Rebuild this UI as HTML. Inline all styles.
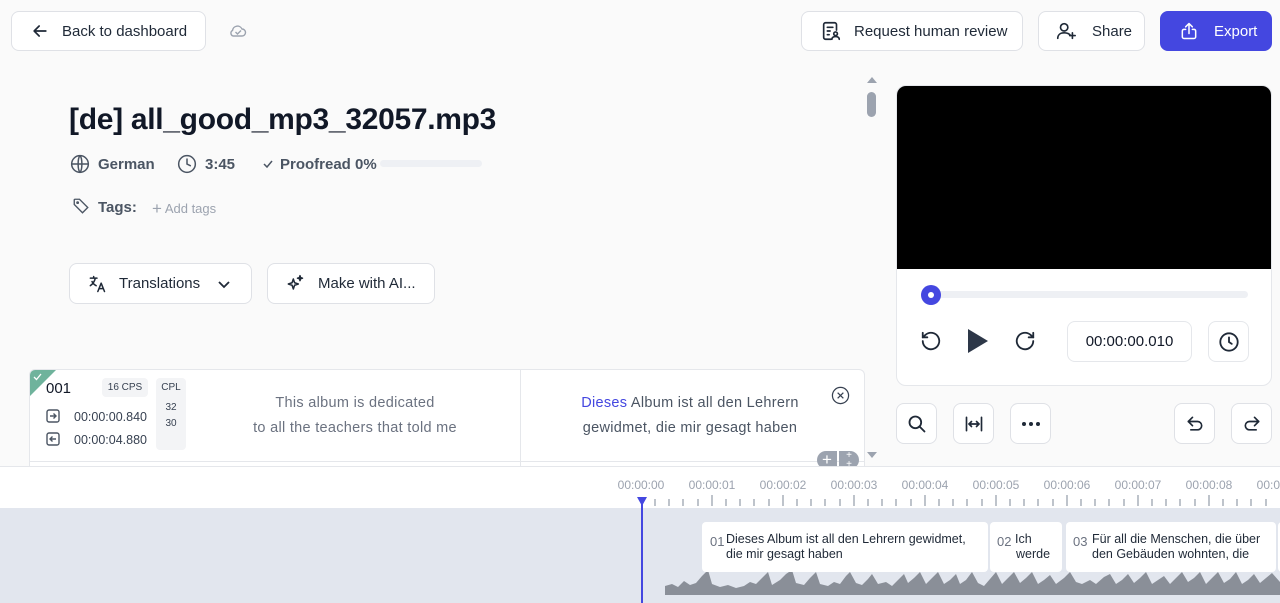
<!DOCTYPE html>
<html><head><meta charset="utf-8">
<style>
*{box-sizing:border-box;margin:0;padding:0}
body{width:1280px;height:603px;overflow:hidden;background:#fafafa;font-family:"Liberation Sans",sans-serif;color:#1f2937;position:relative}
.btn{position:absolute;border:1px solid #dfe1e6;border-radius:8px;background:#fff;display:flex;align-items:center;font-size:15px;color:#1f2937}
.btn svg{flex:none}
.abs{position:absolute}
.sq{position:absolute;width:41px;height:41px;border:1px solid #dfe1e6;border-radius:8px;background:#fff;display:flex;align-items:center;justify-content:center}
.meta{font-size:15px;color:#4b5563;font-weight:bold}
</style></head><body>

<div class="btn" style="left:11px;top:11px;width:195px;height:40px;padding-left:18px">
<svg width="20" height="20" viewBox="0 0 24 24" fill="none" stroke="#1f2937" stroke-width="2" stroke-linecap="round" stroke-linejoin="round"><path d="M19 12H5M11 6l-6 6 6 6"/></svg>
<span style="margin-left:12px">Back to dashboard</span></div>
<svg class="abs" style="left:229px;top:24px" width="18" height="14" viewBox="0 0 18 14" fill="none" stroke="#9ca3af" stroke-width="1.4"><path d="M4 12h9a3.5 3.5 0 0 0 0-7 5 5 0 0 0-9.5 1.5A3 3 0 0 0 4 12z"/><path d="M6.5 8l2 2 3.5-3.5"/></svg>

<div class="btn" style="left:801px;top:11px;width:222px;height:40px;padding-left:18px">
<svg width="22" height="22" viewBox="0 0 24 24" fill="none" stroke="#1f2937" stroke-width="1.8" stroke-linecap="round"><path d="M12 21H6a2 2 0 0 1-2-2V5a2 2 0 0 1 2-2h10a2 2 0 0 1 2 2v6"/><path d="M8 8h6M8 12h3M8 16h2"/><circle cx="17" cy="15" r="2"/><path d="M13 21c0-2 2-3 4-3s4 1 4 3"/></svg>
<span style="margin-left:12px">Request human review</span></div>
<div class="btn" style="left:1038px;top:11px;width:107px;height:40px;padding-left:16px">
<svg width="22" height="22" viewBox="0 0 24 24" fill="none" stroke="#1f2937" stroke-width="1.8" stroke-linecap="round"><circle cx="10" cy="8" r="4"/><path d="M3 20c0-4 3-6 7-6s6 1.5 7 3M19 14v6M16 17h6"/></svg>
<span style="margin-left:15px">Share</span></div>
<div class="btn" style="left:1160px;top:11px;width:112px;height:40px;padding-left:18px;background:#4447e0;border-color:#4447e0;color:#fff">
<svg width="20" height="20" viewBox="0 0 24 24" fill="none" stroke="#fff" stroke-width="1.8" stroke-linecap="round" stroke-linejoin="round"><path d="M8 10H6a2 2 0 0 0-2 2v7a2 2 0 0 0 2 2h12a2 2 0 0 0 2-2v-7a2 2 0 0 0-2-2h-2M12 15V3M8 7l4-4 4 4"/></svg>
<span style="margin-left:15px">Export</span></div>

<div class="abs" style="left:69px;top:103px;font-size:30px;font-weight:bold;color:#111827;letter-spacing:-0.3px">[de] all_good_mp3_32057.mp3</div>

<svg class="abs" style="left:70px;top:154px" width="20" height="20" viewBox="0 0 24 24" fill="none" stroke="#4b5563" stroke-width="1.8"><circle cx="12" cy="12" r="10"/><path d="M2 12h20M12 2c3 3 3 17 0 20M12 2c-3 3-3 17 0 20"/></svg>
<div class="abs meta" style="left:98px;top:156px">German</div>
<svg class="abs" style="left:177px;top:154px" width="20" height="20" viewBox="0 0 24 24" fill="none" stroke="#4b5563" stroke-width="1.8" stroke-linecap="round"><circle cx="12" cy="12" r="10"/><path d="M12 6v6l4 2"/></svg>
<div class="abs meta" style="left:205px;top:156px">3:45</div>
<svg class="abs" style="left:262px;top:158px" width="12" height="12" viewBox="0 0 12 12" fill="none" stroke="#4b5563" stroke-width="1.5"><path d="M2 6l3 3 5-6"/></svg>
<div class="abs meta" style="left:280px;top:156px">Proofread 0%</div>
<div class="abs" style="left:380px;top:160px;width:102px;height:7px;border-radius:4px;background:#eef0f4"></div>

<svg class="abs" style="left:72px;top:197px" width="18" height="18" viewBox="0 0 24 24" fill="none" stroke="#4b5563" stroke-width="1.8"><path d="M3 10V4a1 1 0 0 1 1-1h6l11 11-7 7L3 10z"/><circle cx="7.5" cy="7.5" r="1"/></svg>
<div class="abs meta" style="left:98px;top:199px">Tags:</div>
<div class="abs" style="left:152px;top:198px;font-size:13px;color:#9ca3af"><span style="font-size:17px;position:relative;top:1px">+</span> Add tags</div>

<div class="btn" style="left:69px;top:263px;width:183px;height:41px;padding-left:17px">
<svg width="20" height="20" viewBox="0 0 24 24" fill="none" stroke="#1f2937" stroke-width="1.8" stroke-linecap="round" stroke-linejoin="round"><path d="M4 5h8M8 3v2M10 5c-1 4-3 7-6 9M6 9c1 2 3 4 5 5M13 21l4-10 4 10M14.5 17.5h5"/></svg>
<span style="margin-left:12px">Translations</span>
<svg style="margin-left:16px" width="16" height="16" viewBox="0 0 16 16" fill="none" stroke="#1f2937" stroke-width="1.8"><path d="M3 6l5 5 5-5"/></svg></div>
<div class="btn" style="left:267px;top:263px;width:168px;height:41px;padding-left:17px">
<svg width="20" height="20" viewBox="0 0 24 24" fill="none" stroke="#1f2937" stroke-width="1.8" stroke-linejoin="round"><path d="M10 6l1.5 4.5L16 12l-4.5 1.5L10 18l-1.5-4.5L4 12l4.5-1.5z"/><path d="M18 2l.7 2.3L21 5l-2.3.7L18 8l-.7-2.3L15 5l2.3-.7z"/></svg>
<span style="margin-left:13px">Make with AI...</span></div>

<div class="abs" style="left:867px;top:77px;width:0;height:0;border-left:5px solid transparent;border-right:5px solid transparent;border-bottom:6px solid #9ca3af"></div>
<div class="abs" style="left:867px;top:92px;width:9px;height:25px;border-radius:5px;background:#9ca3af"></div>
<div class="abs" style="left:867px;top:452px;width:0;height:0;border-left:5px solid transparent;border-right:5px solid transparent;border-top:6px solid #9ca3af"></div>

<div class="abs" style="left:29px;top:369px;width:836px;height:110px;background:#fff;border:1px solid #e5e7eb;border-radius:6px;overflow:hidden">
 <div class="abs" style="left:0;top:0;width:0;height:0;border-top:26px solid #6fb39c;border-right:26px solid transparent"></div>
 <svg class="abs" style="left:3px;top:3px" width="9" height="8" viewBox="0 0 9 8" fill="none" stroke="#fff" stroke-width="1.3"><path d="M1 4l2.5 2.5L8 1"/></svg>
 <div class="abs" style="left:16px;top:10px;font-size:15px;color:#111827">001</div>
 <div class="abs" style="left:72px;top:8px;width:46px;height:19px;background:#f3f4f6;border-radius:4px;font-size:10px;text-align:center;line-height:19px;color:#374151">16 CPS</div>
 <div class="abs" style="left:126px;top:8px;width:30px;height:72px;background:#f3f4f6;border-radius:4px;font-size:10px;text-align:center;color:#374151;line-height:16px;padding-top:2px">CPL<br><span style="line-height:24px">32</span><br><span style="position:relative;top:-4px">30</span></div>
 <svg class="abs" style="left:16px;top:39px" width="14" height="14" viewBox="0 0 14 14" fill="none" stroke="#4b5563" stroke-width="1.4"><rect x="1" y="1" width="12" height="12" rx="2"/><path d="M4 7h6M7.5 4.5L10 7 7.5 9.5"/></svg>
 <div class="abs" style="left:44px;top:40px;font-size:12.5px;color:#374151">00:00:00.840</div>
 <svg class="abs" style="left:16px;top:62px" width="14" height="14" viewBox="0 0 14 14" fill="none" stroke="#4b5563" stroke-width="1.4"><rect x="1" y="1" width="12" height="12" rx="2"/><path d="M10 7H4M6.5 4.5L4 7l2.5 2.5"/></svg>
 <div class="abs" style="left:44px;top:63px;font-size:12.5px;color:#374151">00:00:04.880</div>
 <div class="abs" style="left:160px;top:21px;width:330px;text-align:center;font-size:14.5px;color:#6b7280;line-height:24.5px;letter-spacing:0.3px">This album is dedicated<br>to all the teachers that told me</div>
 <div class="abs" style="left:490px;top:0;width:1px;height:110px;background:#e5e7eb"></div>
 <div class="abs" style="left:0;top:91px;width:836px;height:1px;background:#e5e7eb"></div>
 <div class="abs" style="left:510px;top:21px;width:300px;text-align:center;font-size:14.5px;color:#4b5563;line-height:24.5px;letter-spacing:0.3px"><span style="color:#4447e0">Dieses</span> Album ist all den Lehrern<br>gewidmet, die mir gesagt haben</div>
 <svg class="abs" style="left:801px;top:16px" width="19" height="19" viewBox="0 0 20 20" fill="none" stroke="#374151" stroke-width="1.3"><circle cx="10" cy="10" r="8.5"/><path d="M7 7l6 6M13 7l-6 6"/></svg>
</div>
<div class="abs" style="left:817px;top:451px;width:20px;height:18px;border-radius:9px 0 0 9px;background:#9ca3af;color:#fff;font-size:17px;text-align:center;line-height:18px">+</div>
<div class="abs" style="left:839px;top:451px;width:20px;height:18px;border-radius:0 9px 9px 0;background:#9ca3af;color:#fff;font-size:10px;text-align:center;line-height:9px">+<br>+</div>

<div class="abs" style="left:896px;top:85px;width:376px;height:301px;background:#fff;border:1px solid #e5e7eb;border-radius:10px;overflow:hidden">
 <div style="height:183px;background:#000"></div>
 <div class="abs" style="left:28px;top:205px;width:323px;height:7px;border-radius:4px;background:#eef0f4"></div>
 <div class="abs" style="left:24px;top:199px;width:20px;height:20px;border-radius:50%;background:#4447e0"></div>
 <div class="abs" style="left:31px;top:206px;width:6px;height:6px;border-radius:50%;background:#fff"></div>
 <svg class="abs" style="left:23px;top:244px" width="22" height="22" viewBox="0 0 24 24" fill="none" stroke="#1f2937" stroke-width="2" stroke-linecap="round" stroke-linejoin="round"><path d="M3 12a9 9 0 1 0 3-6.7L3 8"/><path d="M3 3v5h5"/></svg>
 <svg class="abs" style="left:70px;top:242px" width="22" height="26" viewBox="0 0 22 26"><path d="M1 1L21 13 1 25z" fill="#2d3748"/></svg>
 <svg class="abs" style="left:117px;top:244px" width="22" height="22" viewBox="0 0 24 24" fill="none" stroke="#1f2937" stroke-width="2" stroke-linecap="round" stroke-linejoin="round"><path d="M21 12a9 9 0 1 1-3-6.7L21 8"/><path d="M21 3v5h-5"/></svg>
 <div class="abs" style="left:170px;top:235px;width:125px;height:41px;border:1px solid #e5e7eb;border-radius:8px;text-align:center;line-height:39px;font-size:15px;color:#111827">00:00:00.010</div>
 <div class="abs" style="left:311px;top:235px;width:41px;height:41px;border:1px solid #e5e7eb;border-radius:8px;display:flex;align-items:center;justify-content:center"><svg width="22" height="22" viewBox="0 0 24 24" fill="none" stroke="#1f2937" stroke-width="2" stroke-linecap="round"><circle cx="12" cy="12" r="9.5"/><path d="M12 7v5l3 2"/></svg></div>
</div>

<div class="sq" style="left:896px;top:403px"><svg width="20" height="20" viewBox="0 0 24 24" fill="none" stroke="#1f2937" stroke-width="2.2" stroke-linecap="round"><circle cx="10" cy="10" r="7"/><path d="M15 15l6 6"/></svg></div>
<div class="sq" style="left:953px;top:403px"><svg width="20" height="20" viewBox="0 0 24 24" fill="none" stroke="#1f2937" stroke-width="2" stroke-linecap="round"><path d="M3 4v16M21 4v16M6 12h12M9 9l-3 3 3 3M15 9l3 3-3 3"/></svg></div>
<div class="sq" style="left:1010px;top:403px"><svg width="20" height="6" viewBox="0 0 20 6" fill="#1f2937"><circle cx="3" cy="3" r="2"/><circle cx="10" cy="3" r="2"/><circle cx="17" cy="3" r="2"/></svg></div>
<div class="sq" style="left:1174px;top:403px"><svg width="20" height="20" viewBox="0 0 24 24" fill="none" stroke="#1f2937" stroke-width="2" stroke-linecap="round" stroke-linejoin="round"><path d="M9 14L4 9l5-5"/><path d="M4 9h11a5 5 0 0 1 0 10H7"/></svg></div>
<div class="sq" style="left:1231px;top:403px"><svg width="20" height="20" viewBox="0 0 24 24" fill="none" stroke="#1f2937" stroke-width="2" stroke-linecap="round" stroke-linejoin="round"><path d="M15 14l5-5-5-5"/><path d="M20 9H9a5 5 0 0 0 0 10h8"/></svg></div>

<div class="abs" style="left:0;top:466px;width:1280px;height:42px;background:#fff;border-top:1px solid #e5e7eb"></div>
<div class="abs" style="left:0;top:508px;width:1280px;height:95px;background:#e2e6ee"></div>
<svg class="abs" style="left:0;top:466px" width="1280" height="137">
<g font-family="Liberation Sans" font-size="12" fill="#9ca3af" text-anchor="middle">
<text x="641" y="23">00:00:00</text><text x="712" y="23">00:00:01</text><text x="783" y="23">00:00:02</text><text x="854" y="23">00:00:03</text><text x="925" y="23">00:00:04</text><text x="996" y="23">00:00:05</text><text x="1067" y="23">00:00:06</text><text x="1138" y="23">00:00:07</text><text x="1209" y="23">00:00:08</text><text x="1280" y="23">00:00:09</text>
</g>
<g stroke="#9ca3af" stroke-width="1.3">
<path d="M655 33v7M669 33v7M683 33v7M698 33v7M712 29v11M726 33v7M740 33v7M754 33v7M769 33v7M783 29v11M797 33v7M811 33v7M825 33v7M840 33v7M854 29v11M868 33v7M882 33v7M896 33v7M911 33v7M925 29v11M939 33v7M953 33v7M967 33v7M982 33v7M996 29v11M1010 33v7M1024 33v7M1038 33v7M1053 33v7M1067 29v11M1081 33v7M1095 33v7M1109 33v7M1124 33v7M1138 29v11M1152 33v7M1166 33v7M1180 33v7M1195 33v7M1209 29v11M1223 33v7M1237 33v7M1251 33v7M1266 33v7"/>
</g>
<polygon points="665,129 665,120 672,118 678,121 684,115 690,119 696,117 702,110 708,104 712,118 720,121 728,119 736,122 744,120 750,116 756,118 762,112 768,106 772,119 780,114 786,108 792,104 796,117 804,119 810,112 816,106 820,118 828,120 834,116 840,118 846,110 850,106 856,117 862,119 868,113 872,108 878,118 886,116 892,120 898,114 904,108 908,117 914,112 920,106 926,118 932,112 938,106 944,118 950,114 956,108 960,118 966,114 972,106 978,117 984,120 990,113 996,106 1002,118 1008,112 1014,106 1020,117 1026,112 1032,106 1038,118 1044,114 1050,109 1056,118 1064,112 1070,106 1076,116 1082,118 1090,114 1096,118 1104,111 1110,108 1116,118 1122,114 1128,108 1134,117 1140,112 1146,106 1152,118 1158,114 1164,110 1170,118 1176,112 1182,106 1188,116 1194,112 1200,106 1206,118 1212,112 1218,106 1224,117 1230,113 1236,106 1242,118 1248,114 1254,108 1260,117 1266,112 1272,107 1280,116 1280,129" fill="#8a8f98"/>
<rect x="702" y="56" width="286" height="50" rx="4" fill="#fff"/>
<rect x="990" y="56" width="72" height="50" rx="4" fill="#fff"/>
<rect x="1066" y="56" width="210" height="50" rx="4" fill="#fff"/>
<rect x="1278" y="56" width="10" height="50" rx="4" fill="#fff"/>
<g font-family="Liberation Sans" font-size="12.5" fill="#1f2937">
<text x="710" y="80" fill="#6b7280" font-size="13">01</text><text x="726" y="77">Dieses Album ist all den Lehrern gewidmet,</text><text x="726" y="92">die mir gesagt haben</text>
<text x="997" y="80" fill="#6b7280" font-size="13">02</text><text x="1015" y="77">Ich</text><text x="1016" y="92">werde</text>
<text x="1073" y="80" fill="#6b7280" font-size="13">03</text><text x="1092" y="77">Für all die Menschen, die über</text><text x="1092" y="92">den Gebäuden wohnten, die</text>
</g>
<rect x="641" y="36" width="2" height="101" fill="#4447e0"/>
<path d="M637 31h10l-5 9z" fill="#4447e0"/>
</svg>
</body></html>
